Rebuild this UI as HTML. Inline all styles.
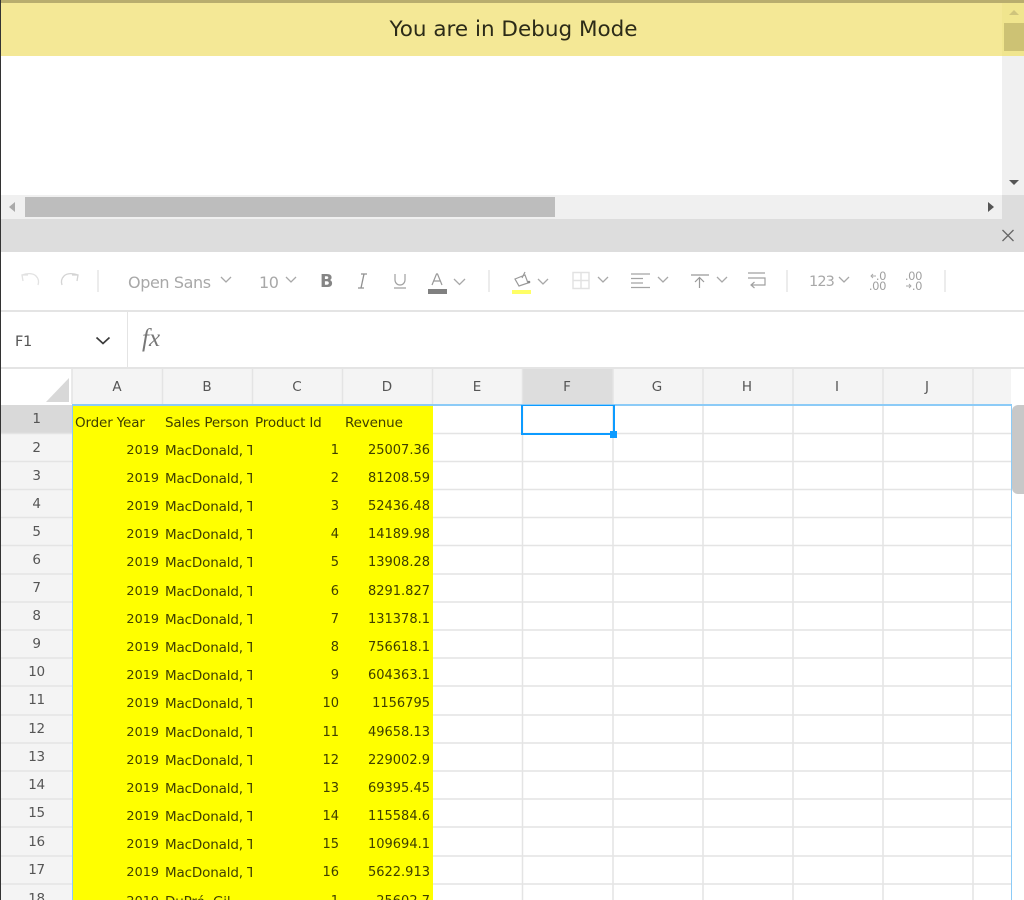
<!DOCTYPE html>
<html><head><meta charset="utf-8"><style>
html,body{margin:0;padding:0;background:#fff}
#p{position:relative;width:1024px;height:900px;overflow:hidden;background:#fff;font-family:"DejaVu Sans","Liberation Sans",sans-serif;color:#444}
#p div,#p span,#p svg{position:absolute}
.r{left:72px;width:361px;height:28px;font-size:13.5px;letter-spacing:-.15px;line-height:28px;color:#3f3f00;white-space:nowrap}
.a{right:274px;top:4px;font-size:12.8px;letter-spacing:0}.b{left:93px;top:4px;width:87px;overflow:hidden}.c{right:94px;top:4px;font-size:13px;letter-spacing:0}.d{right:3px;top:4px;font-size:13px;letter-spacing:0}
.n{left:1px;width:71px;text-align:center;font-size:13.5px;letter-spacing:-.3px;line-height:28px;height:28px;color:#555;margin-top:.5px}
.h{top:370px;width:90px;height:35px;line-height:35px;text-align:center;font-size:13.5px;color:#555}
.t{font-size:16px;letter-spacing:-.4px;color:#a8a8a8;white-space:nowrap}
</style></head><body><div id="p">
<div style="left:0;top:0;width:1024px;height:3px;background:#b8ad6e"></div>
<div style="left:0;top:3px;width:1024px;height:53px;background:#f4e896"></div>
<div style="left:0;top:16px;width:1027px;text-align:center;font-size:21.5px;line-height:28px;color:#2c2b18">You are in Debug Mode</div>
<div style="left:1002px;top:3px;width:22px;height:53px;background:#f0e58e"></div>
<div style="left:1004px;top:23px;width:20px;height:28px;background:#cdc274"></div>
<div style="left:1002px;top:56px;width:22px;height:139px;background:#f0f0f0"></div>
<svg style="left:0;top:0" width="1024" height="252"><path d="M1009 15l5-5 5 5z" fill="#cfc47c"/><path d="M1009 180h10l-5 5z" fill="#555"/></svg>
<div style="left:0;top:195px;width:1002px;height:24px;background:#f0f0f0"></div>
<div style="left:25px;top:197px;width:530px;height:20px;background:#bdbdbd"></div>
<div style="left:1002px;top:195px;width:22px;height:24px;background:#ddd"></div>
<div style="left:0;top:219px;width:1024px;height:33px;background:#ddd"></div>
<svg style="left:0;top:190px" width="1024" height="70"><path d="M15 12v10l-6-5z" fill="#aaa"/><path d="M988 12v10l6-5z" fill="#555"/><path d="M1002.500 40l11 11M1013.500 40l-11 11" stroke="#666" stroke-width="1.300" fill="none"/></svg>

<div style="left:0;top:310px;width:1024px;height:1.500px;background:#e4e4e4"></div>
<div style="left:0;top:367px;width:1024px;height:2px;background:#e4e4e4"></div>
<div style="left:126.500px;top:311px;width:1.500px;height:56px;background:#e4e4e4"></div>

<svg style="left:0;top:252px" width="1024" height="58" fill="none">
<path d="M23 29l-1-6 6 0M22 23c5-2 11-2 14 1 3 3 3 6 2 9" stroke="#e2e2e2" stroke-width="1.300"/>
<path d="M77 29l1-6-6 0M78 23c-5-2-11-2-14 1-3 3-3 6-2 9" stroke="#d4d4d4" stroke-width="1.300"/>
<path d="M98 18v22M489 18v22M787 18v22M945 18v22" stroke="#ececec" stroke-width="2"/>
<g stroke="#a8a8a8" stroke-width="1.300">
<path d="M221 25l5 5 5-5M286 25l5 5 5-5M454 27l5.500 5.500 5.500-5.500M538 27l5 5 5-5M598 25l5 5 5-5M658 25l5 5 5-5M717 25l5 5 5-5M839 25l5 5 5-5"/>
</g>
<path d="M395 22v6a5 5 0 0 0 10 0v-6M394 36h12" stroke="#a0a0a0" stroke-width="1.200"/>
<path d="M358 36h6M361 36l3-14M361 22h6" stroke="#909090" stroke-width="1.300"/>
<path d="M432 33l4.500-11h1l4.500 11M433.500 29h7" stroke="#999" stroke-width="1.200"/>
<rect x="428" y="37" width="19" height="5" fill="#808080"/>
<path d="M515 27l10-4 3 8-9 3zM522 26l3-6" stroke="#999" stroke-width="1.200"/><circle cx="529" cy="30" r="1.300" fill="#888"/>
<rect x="512" y="38" width="19" height="4" fill="#ffff66"/>
<path d="M573 20.500h16v16h-16zM581 20.500v16M573 28.500h16" stroke="#e2e2e2" stroke-width="1.400"/>
<path d="M631 22h19M631 26.500h12M631 31h12M631 35.500h19" stroke="#a4a4a4" stroke-width="1.200"/>
<path d="M691 23h18M699.500 36v-10M695 30l4.500-4.500 4.500 4.500" stroke="#999" stroke-width="1.200"/>
<path d="M748 21h17M748 26h17v7h-14M754.500 30l-3.500 3 3.500 3" stroke="#a0a0a0" stroke-width="1.200"/>
<path d="M876 24h-5M873 22l-2 2 2 2M906 34h5M909 32l2 2-2 2" stroke="#a8a8a8" stroke-width=".9"/>
</svg>
<div class="t" style="left:128px;top:273px">Open Sans</div>
<div class="t" style="left:259px;top:273px">10</div>
<div style="left:320px;top:272px;font-size:17.5px;font-weight:bold;color:#858585">B</div>
<div class="t" style="left:809px;top:274px;font-size:14.5px;letter-spacing:-.9px">123</div>
<div style="left:866px;top:271px;font-size:11.5px;line-height:10px;color:#a0a0a0;letter-spacing:-.4px;text-align:right;width:20px">.0<br>.00</div>
<div style="left:902px;top:271px;font-size:11.5px;line-height:10px;color:#a0a0a0;letter-spacing:-.4px;text-align:right;width:20px">.00<br>.0</div>

<div style="left:15px;top:334px;font-size:14.5px;letter-spacing:-.3px;color:#555">F1</div>
<svg style="left:90px;top:331px" width="60" height="24" fill="none"><path d="M6.500 6.500l6.500 6 6.500-6" stroke="#3a3a3a" stroke-width="1.700"/></svg>
<div style="left:142px;top:325px;font-family:'Liberation Serif',serif;font-style:italic;font-size:25px;color:#777">fx</div>

<div style="left:72px;top:369px;width:939px;height:35px;background:#f4f4f4"></div>
<div style="left:522px;top:369px;width:91px;height:35px;background:#ddd"></div>
<div style="left:1px;top:405px;width:71px;height:495px;background:#f4f4f4"></div>
<div style="left:1px;top:405px;width:71px;height:28px;background:#d9d9d9"></div>
<svg style="left:0;top:369px" width="80" height="36"><path d="M46 33L69 9v24z" fill="#d8d8d8"/></svg>

<svg style="left:0;top:369px" width="1024" height="531" fill="none" stroke="#e4e4e4" stroke-width="1.500">
<path d="M72 0v35M162.500 0v35M252.500 0v35M342.500 0v35M432.500 0v35M522.500 0v35M613 0v35M703 0v35M793 0v35M883 0v35M973 0v35"/>
<path d="M522.500 36v495M613 36v495M703 36v495M793 36v495M883 36v495M973 36v495"/>
<path d="M433 64.500h578M433 92.500h578M433 120.500h578M433 148.500h578M433 176.500h578M433 205h578M433 233h578M433 261h578M433 289h578M433 317h578M433 346h578M433 374h578M433 402h578M433 430h578M433 458h578M433 487h578M433 515h578"/>
<path d="M1 64.500h71M1 92.500h71M1 120.500h71M1 148.500h71M1 176.500h71M1 205h71M1 233h71M1 261h71M1 289h71M1 317h71M1 346h71M1 374h71M1 402h71M1 430h71M1 458h71M1 487h71M1 515h71"/>
</svg>
<div style="left:72px;top:405px;width:361px;height:495px;background:#ffff00"></div>
<div style="left:72px;top:404px;width:940px;height:1.500px;background:#8ccbf7"></div>
<div style="left:71.500px;top:404px;width:1.200px;height:496px;background:#8ccbf7"></div>
<div style="left:1011px;top:404px;width:1.200px;height:496px;background:#8ccbf7"></div>
<div style="left:1012px;top:405px;width:12px;height:89px;background:#c8c8c8;border-radius:6px 0 0 6px"></div>
<div style="left:521px;top:405px;width:89.500px;height:26.500px;border:2px solid #0d9bff;border-top-width:1px"></div>
<div style="left:610px;top:431px;width:7px;height:7px;background:#0d9bff"></div>
<div style="left:0;top:0;width:1px;height:900px;background:#333"></div>

<div class="h" style="left:72px">A</div><div class="h" style="left:162px">B</div><div class="h" style="left:252px">C</div><div class="h" style="left:342px">D</div><div class="h" style="left:432px">E</div><div class="h" style="left:522px">F</div><div class="h" style="left:612px">G</div><div class="h" style="left:702px">H</div><div class="h" style="left:792px">I</div><div class="h" style="left:882px">J</div>

<div class="n" style="top:404px">1</div><div class="n" style="top:433px">2</div><div class="n" style="top:461px">3</div><div class="n" style="top:489px">4</div><div class="n" style="top:517px">5</div><div class="n" style="top:545px">6</div><div class="n" style="top:573px">7</div><div class="n" style="top:601px">8</div><div class="n" style="top:629px">9</div><div class="n" style="top:657px">10</div><div class="n" style="top:685px">11</div><div class="n" style="top:714px">12</div><div class="n" style="top:742px">13</div><div class="n" style="top:770px">14</div><div class="n" style="top:798px">15</div><div class="n" style="top:827px">16</div><div class="n" style="top:855px">17</div><div class="n" style="top:884px">18</div>

<div class="r" style="top:405px"><span style="left:3px;top:4px">Order Year</span><span style="left:93px;top:4px">Sales Person</span><span style="left:183px;top:4px">Product Id</span><span style="left:273px;top:4px">Revenue</span></div>
<div class="r" style="top:433px"><span class="a">2019</span><span class="b">MacDonald, Tom</span><span class="c">1</span><span class="d">25007.36</span></div>
<div class="r" style="top:461px"><span class="a">2019</span><span class="b">MacDonald, Tom</span><span class="c">2</span><span class="d">81208.59</span></div>
<div class="r" style="top:489px"><span class="a">2019</span><span class="b">MacDonald, Tom</span><span class="c">3</span><span class="d">52436.48</span></div>
<div class="r" style="top:517px"><span class="a">2019</span><span class="b">MacDonald, Tom</span><span class="c">4</span><span class="d">14189.98</span></div>
<div class="r" style="top:545px"><span class="a">2019</span><span class="b">MacDonald, Tom</span><span class="c">5</span><span class="d">13908.28</span></div>
<div class="r" style="top:574px"><span class="a">2019</span><span class="b">MacDonald, Tom</span><span class="c">6</span><span class="d">8291.827</span></div>
<div class="r" style="top:602px"><span class="a">2019</span><span class="b">MacDonald, Tom</span><span class="c">7</span><span class="d">131378.1</span></div>
<div class="r" style="top:630px"><span class="a">2019</span><span class="b">MacDonald, Tom</span><span class="c">8</span><span class="d">756618.1</span></div>
<div class="r" style="top:658px"><span class="a">2019</span><span class="b">MacDonald, Tom</span><span class="c">9</span><span class="d">604363.1</span></div>
<div class="r" style="top:686px"><span class="a">2019</span><span class="b">MacDonald, Tom</span><span class="c">10</span><span class="d">1156795</span></div>
<div class="r" style="top:715px"><span class="a">2019</span><span class="b">MacDonald, Tom</span><span class="c">11</span><span class="d">49658.13</span></div>
<div class="r" style="top:743px"><span class="a">2019</span><span class="b">MacDonald, Tom</span><span class="c">12</span><span class="d">229002.9</span></div>
<div class="r" style="top:771px"><span class="a">2019</span><span class="b">MacDonald, Tom</span><span class="c">13</span><span class="d">69395.45</span></div>
<div class="r" style="top:799px"><span class="a">2019</span><span class="b">MacDonald, Tom</span><span class="c">14</span><span class="d">115584.6</span></div>
<div class="r" style="top:827px"><span class="a">2019</span><span class="b">MacDonald, Tom</span><span class="c">15</span><span class="d">109694.1</span></div>
<div class="r" style="top:855px"><span class="a">2019</span><span class="b">MacDonald, Tom</span><span class="c">16</span><span class="d">5622.913</span></div>
<div class="r" style="top:884px"><span class="a">2019</span><span class="b">DuPré, Gil</span><span class="c">1</span><span class="d">25602.7</span></div>
</div></body></html>
